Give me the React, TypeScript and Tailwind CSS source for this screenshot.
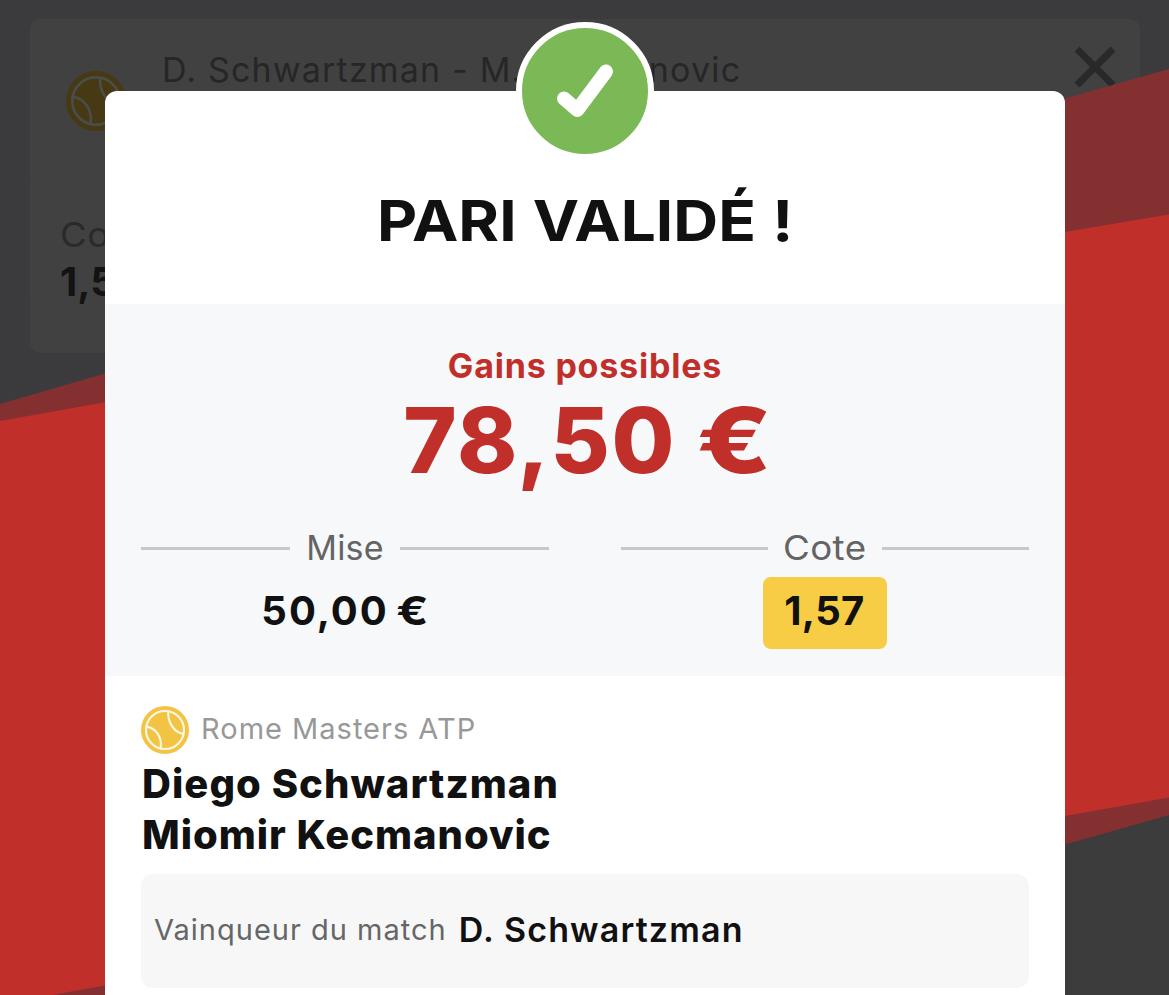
import React from "react";

type BallProps = { className: string; fill: string; line: string };

function TennisBall({ className, fill, line }: BallProps) {
  return (
    <svg viewBox="0 0 48 48" className={className} fill="none" aria-hidden="true">
      <circle cx="24" cy="24" r="24" fill={fill} />
      <g stroke={line} strokeWidth="2.1">
        <circle cx="24" cy="24" r="19" />
        <path d="M27.3 5.4C26.6 15.5 32.2 26.3 42.6 28" />
        <path d="M5.6 20.6C14.8 22 21.4 31 19.6 42.4" />
      </g>
    </svg>
  );
}

function Backdrop() {
  return (
    <svg
      viewBox="0 0 1169 995"
      className="absolute top-0 left-0 h-[995px] w-[1169px]"
      aria-hidden="true"
    >
      <polygon points="0,404 105,373.5 1065,98.5 1169,69 1169,815 1065,844.5 540,995 0,995" fill="#843031" />
      <polygon points="0,421 105,402.3 1065,232 1169,214.5 1169,797.5 1065,816 105,985.5 52,995 0,995" fill="#c12f2b" />
    </svg>
  );
}

function BetCard() {
  return (
    <div className="absolute top-[19px] left-[30px] h-[334px] w-[1110px] rounded-[10px] bg-[#414141]">
      <div className="flex h-[162px] items-start border-b border-[#3f3f3f]">
        <TennisBall className="mt-[52px] ml-[36px] size-[60px] shrink-0" fill="#473913" line="#4c4c4a" />
        <p className="mt-[29px] ml-[36px] text-[34px] leading-[44px] tracking-[1.18px] whitespace-nowrap text-[#262626]">
          D. Schwartzman - M. Kecmanovic
        </p>
        <svg viewBox="0 0 42 42" className="mt-[27px] mr-[24px] ml-auto size-[42px]" aria-hidden="true">
          <path d="M3 3L39 39M39 3L3 39" stroke="#292929" strokeWidth="7" />
        </svg>
      </div>
      <div className="flex flex-col items-start pt-[32px] pl-[30px]">
        <span className="origin-left scale-x-[1.08] text-[34px] leading-[44px] tracking-[0.4px] text-[#2a2a2a]">Cote</span>
        <span className="text-[40px] leading-[50px] font-bold text-[#131313]">1,57</span>
      </div>
    </div>
  );
}

function Rule() {
  return <span className="mt-px h-[3px] flex-1 bg-[#c8c8ca]" />;
}

export default function App() {
  return (
    <main className="relative h-[995px] w-[1169px] overflow-hidden bg-linear-to-b from-[#3b3b3e] to-[#3c3c3d] font-['Inter',sans-serif] text-[#111111]">
      <BetCard />
      <Backdrop />

      <section className="absolute top-[91px] left-[105px] flex h-[920px] w-[960px] flex-col rounded-[12px] bg-white">
        <div className="absolute -top-[69px] left-[411px] flex size-[138px] items-center justify-center rounded-full border-[6px] border-white bg-[#7bb957]">
          <svg viewBox="0 0 126 126" className="size-[126px]" fill="none" aria-hidden="true">
            <path
              d="M42 70.5L55.3 82L84 43.5"
              stroke="white"
              strokeWidth="14"
              strokeLinecap="round"
              strokeLinejoin="round"
            />
          </svg>
        </div>

        <header className="h-[213px] pt-[94px]">
          <h1 className="scale-x-[1.09] text-center text-[57px] leading-[72px] font-bold whitespace-nowrap [word-spacing:1.4px]">
            PARI VALIDÉ !
          </h1>
        </header>

        <div className="flex h-[372px] flex-col bg-[#f7f8fa] px-9 pt-[42px] text-center">
          <p className="text-[34px] leading-[40px] font-bold tracking-[0.8px] text-[#c12f2b]">Gains possibles</p>
          <p className="mt-1 pl-px text-[91px] leading-[100px] font-extrabold tracking-[1.6px] whitespace-nowrap text-[#c12f2b] [word-spacing:5.6px]">
            78,50 <span className="inline-block scale-x-[1.2]">€</span>
          </p>
          <div className="mt-[36px] grid grid-cols-2 gap-[72px]">
            <div>
              <div className="flex h-[44px] items-center gap-4 text-[34px] leading-[44px] text-[#646464]">
                <Rule />
                <span className="tracking-[0.2px]">Mise</span>
                <Rule />
              </div>
              <p className="mt-[7px] text-[40px] leading-[68px] font-bold tracking-[2px] [word-spacing:-1px]">
                50,00 <span className="inline-block scale-x-[1.18]">€</span>
              </p>
            </div>
            <div>
              <div className="flex h-[44px] items-center gap-[18px] text-[34px] leading-[44px] text-[#646464]">
                <Rule />
                <span className="scale-x-[1.08] tracking-[0.4px]">Cote</span>
                <Rule />
              </div>
              <p className="mx-auto mt-[7px] h-[72px] w-[124px] rounded-[8px] bg-[#f7cd45] pr-px text-[40px] leading-[68px] font-bold tracking-[0.3px]">
                1,57
              </p>
            </div>
          </div>
        </div>

        <div className="flex flex-col px-9 pt-[30px]">
          <div className="flex h-[48px] items-center gap-[12px]">
            <TennisBall className="size-[48px]" fill="#f3c443" line="#fdf8e6" />
            <span className="pb-[2px] text-[29px] leading-[46px] tracking-[1px] text-[#989898]">Rome Masters ATP</span>
          </div>
          <h2 className="mt-[4px] pl-px text-[40px] leading-[51px] font-extrabold">
            <span className="block tracking-[1.05px]">Diego Schwartzman</span>
            <span className="block tracking-[0.95px]">Miomir Kecmanovic</span>
          </h2>
          <div className="mt-[14px] flex h-[114px] items-center rounded-[12px] bg-[#f7f7f7] pb-[2px] pl-[13px]">
            <span className="text-[29px] leading-[40px] tracking-[1px] text-[#666666]">Vainqueur du match</span>
            <span className="ml-[12px] text-[34px] leading-[40px] font-semibold tracking-[1.15px]">D. Schwartzman</span>
          </div>
        </div>
      </section>
    </main>
  );
}
